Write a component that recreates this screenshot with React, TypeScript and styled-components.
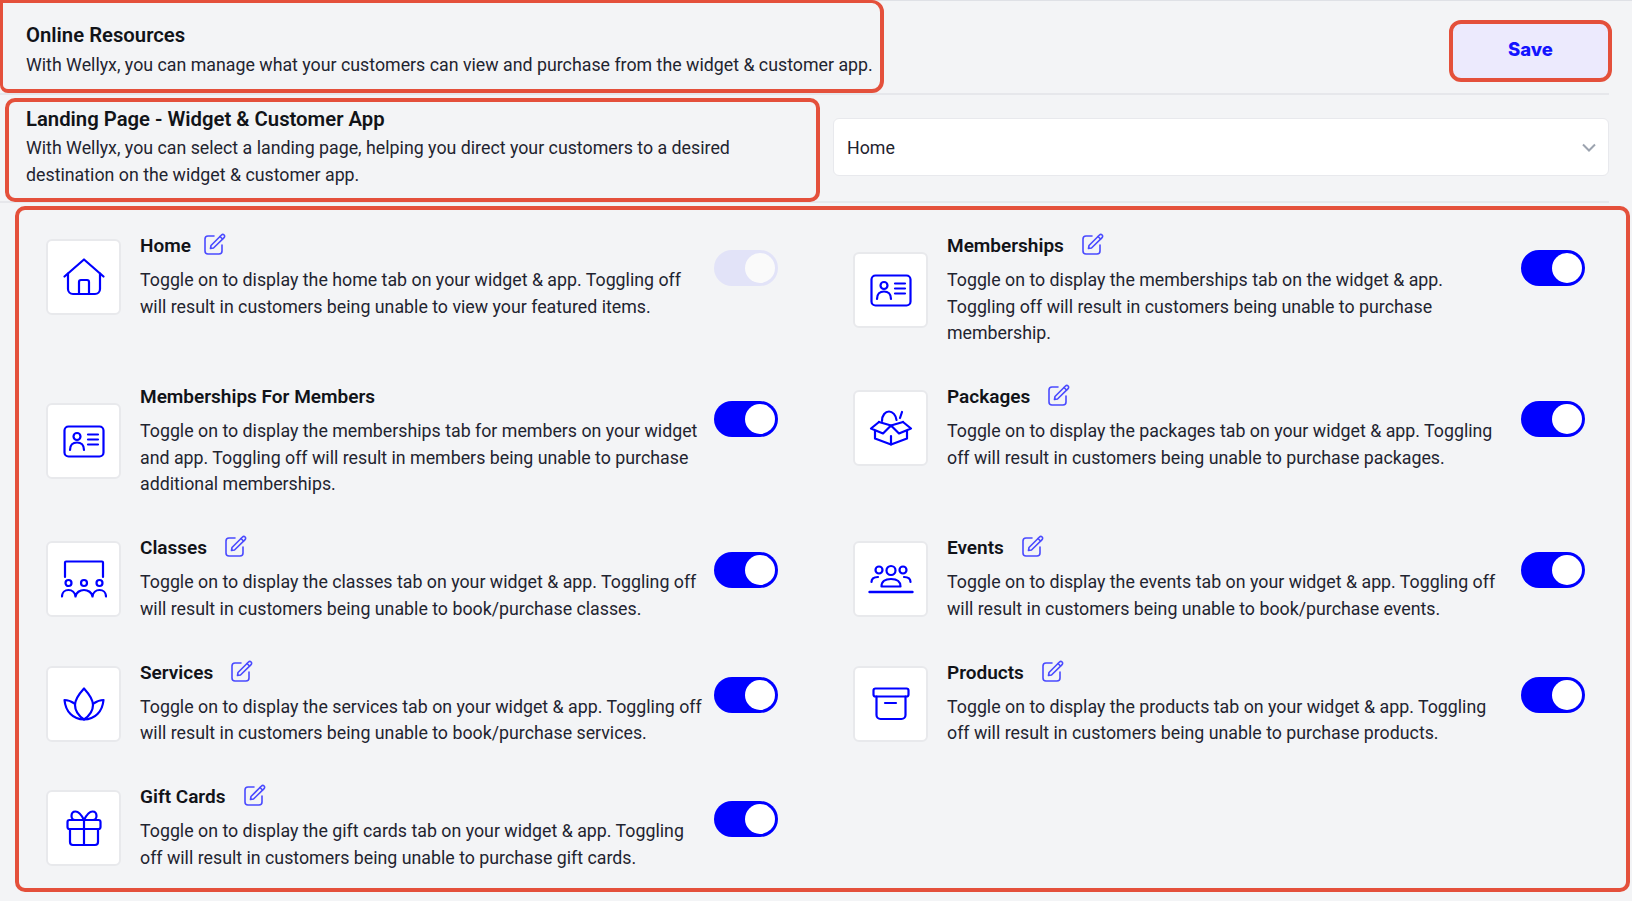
import type { ReactNode } from 'react';
import styled, { createGlobalStyle } from 'styled-components';

const GlobalStyle = createGlobalStyle`
  html, body {
    margin: 0;
    padding: 0;
    background: #f3f4f6;
  }
  * {
    box-sizing: border-box;
  }
`;

const BLUE = '#0000ff';
const RED = '#e4503b';

const Svg = ({ w, h, children }: { w: number; h: number; children: ReactNode }) => (
  <svg
    width={w}
    height={h}
    viewBox={`0 0 ${w} ${h}`}
    fill="none"
    stroke={BLUE}
    strokeWidth="2.200"
    strokeLinecap="round"
    strokeLinejoin="round"
  >
    {children}
  </svg>
);

const HomeIcon = () => (
  <Svg w={42} h={38}>
    <path d="M1.5 18.5 L21 1.5 L40.5 18.5" />
    <path d="M5 15.5 V31 a5 5 0 0 0 5 5 H32 a5 5 0 0 0 5 -5 V15.5" />
    <path d="M16 36 V24 a2 2 0 0 1 2 -2 h6 a2 2 0 0 1 2 2 V36" />
  </Svg>
);

const CardIcon = () => (
  <Svg w={42} h={33}>
    <rect x="1.5" y="1.5" width="39" height="30" rx="4" />
    <circle cx="14" cy="11.5" r="3.5" />
    <path d="M7 25 c0 -5 3 -7.5 7 -7.5 s7 2.5 7 7.5" />
    <path d="M25 9.5 H35 M25 14.5 H35 M25 19.5 H35" />
  </Svg>
);

const ClassesIcon = () => (
  <Svg w={46} h={38}>
    <path d="M4 17 V2.5 a1 1 0 0 1 1 -1 H41 a1 1 0 0 1 1 1 V17" />
    <circle cx="7.5" cy="23" r="3" />
    <circle cx="23" cy="23" r="3" />
    <circle cx="38.5" cy="23" r="3" />
    <path d="M1 36.5 c0 -4 3 -6.5 6.5 -6.5 s6.5 2.5 7 6.5 c0.5 -4 4.5 -6.5 8.5 -6.5 s8 2.500 8.500 6.500 c0.500 -4 3.500 -6.500 7 -6.500 s6.500 2.500 6.500 6.500" />
  </Svg>
);

const LotusIcon = () => (
  <Svg w={42} h={34}>
    <path d="M21 1.500 C16 7 12 12 12 18 C12 24 16 29 21 32.500 C26 29 30 24 30 18 C30 12 26 7 21 1.500 Z" />
    <path d="M11.500 16.500 C8.500 14.500 5.500 13 1.500 13 C2.500 24.500 10 32.500 21 32.500 C32 32.500 39.500 24.500 40.500 13 C36.500 13 33.500 14.500 30.500 16.500" />
  </Svg>
);

const GiftIcon = () => (
  <Svg w={36} h={37}>
    <rect x="1.500" y="10" width="33" height="9" rx="2" />
    <path d="M4 19 V32 a3 3 0 0 0 3 3 H29 a3 3 0 0 0 3 -3 V19" />
    <path d="M18 10 V35" />
    <path d="M18 10 C15 4 12 1.500 9.500 1.500 C6.500 1.500 5.500 4 5.500 6 C5.500 8 7 10 9 10" />
    <path d="M18 10 C21 4 24 1.500 26.500 1.500 C29.500 1.500 30.500 4 30.500 6 C30.500 8 29 10 27 10" />
  </Svg>
);

const PackageIcon = () => (
  <Svg w={44} h={36}>
    <path d="M13 11 C13 5 16.500 1.500 20 1.500 C23.500 1.500 27 5 27.500 10" />
    <path d="M31 8 L33 2" />
    <path d="M10 12 L22 15.500 L34 12" />
    <path d="M10 12 L2 18.500 L14 23.500 L22 15.500 L30 23.500 L42 18.500 L34 12" />
    <path d="M6 21 V28.500 L22 34.500 L38 28.500 V21" />
    <path d="M22 26 V34.500" />
  </Svg>
);

const EventsIcon = () => (
  <Svg w={46} h={30}>
    <circle cx="11" cy="6" r="3.500" />
    <circle cx="23" cy="6.500" r="4.500" />
    <circle cx="35" cy="6" r="3.500" />
    <path d="M3.500 18 C3.500 14.500 6.500 13 10 13" />
    <path d="M42.500 18 C42.500 14.500 39.500 13 36 13" />
    <path d="M13.500 22.500 C13.500 17.500 17 15 23 15 C29 15 32.500 17.500 32.500 22.500 Z" />
    <path d="M1.500 28 H44.500" strokeWidth="2.400" />
  </Svg>
);

const BoxIcon = () => (
  <Svg w={38} h={34}>
    <rect x="1.500" y="1.500" width="35" height="8" rx="2" />
    <path d="M4.500 9.500 V28 a4 4 0 0 0 4 4 H29.500 a4 4 0 0 0 4 -4 V9.500" />
    <path d="M13 16 H24" />
  </Svg>
);

const EditIcon = () => (
  <svg
    width="22"
    height="22"
    viewBox="0 0 22 22"
    fill="none"
    stroke="#4a4aff"
    strokeWidth="1.600"
    strokeLinecap="round"
    strokeLinejoin="round"
  >
    <path d="M10 3 H4 a3 3 0 0 0 -3 3 V18 a3 3 0 0 0 3 3 H15 a3 3 0 0 0 3 -3 V12" />
    <path d="M7 12.500 L17.500 2 a1.800 1.800 0 0 1 2.600 2.600 L9.500 15 L6.500 15.500 Z" />
    <path d="M16 3.500 L18.500 6" />
  </svg>
);

const ChevronIcon = () => (
  <svg width="14" height="9" viewBox="0 0 14 9" fill="none" stroke="#9ca3af" strokeWidth="2">
    <path d="M1 1.500 L7 7.500 L13 1.500" />
  </svg>
);

interface Resource {
  title: string;
  text: ReactNode;
  icon: ReactNode;
  disabled?: boolean;
  tightEdit?: boolean;
  noEdit?: boolean;
}

const resources: Resource[] = [
  {
    title: 'Home',
    text: 'Toggle on to display the home tab on your widget & app. Toggling off will result in customers being unable to view your featured items.',
    icon: <HomeIcon />,
    disabled: true,
    tightEdit: true,
  },
  {
    title: 'Memberships',
    text: 'Toggle on to display the memberships tab on the widget & app. Toggling off will result in customers being unable to purchase membership.',
    icon: <CardIcon />,
  },
  {
    title: 'Memberships For Members',
    text: 'Toggle on to display the memberships tab for members on your widget and app. Toggling off will result in members being unable to purchase additional memberships.',
    icon: <CardIcon />,
    noEdit: true,
  },
  {
    title: 'Packages',
    text: 'Toggle on to display the packages tab on your widget & app. Toggling off will result in customers being unable to purchase packages.',
    icon: <PackageIcon />,
  },
  {
    title: 'Classes',
    text: 'Toggle on to display the classes tab on your widget & app. Toggling off will result in customers being unable to book/purchase classes.',
    icon: <ClassesIcon />,
  },
  {
    title: 'Events',
    text: 'Toggle on to display the events tab on your widget & app. Toggling off will result in customers being unable to book/purchase events.',
    icon: <EventsIcon />,
  },
  {
    title: 'Services',
    text: 'Toggle on to display the services tab on your widget & app. Toggling off will result in customers being unable to book/purchase services.',
    icon: <LotusIcon />,
  },
  {
    title: 'Products',
    text: 'Toggle on to display the products tab on your widget & app. Toggling off will result in customers being unable to purchase products.',
    icon: <BoxIcon />,
  },
  {
    title: 'Gift Cards',
    text: 'Toggle on to display the gift cards tab on your widget & app. Toggling off will result in customers being unable to purchase gift cards.',
    icon: <GiftIcon />,
  },
];

const App = () => (
  <Page>
    <GlobalStyle />
    <TopRow>
      <IntroBox>
        <Heading>Online Resources</Heading>
        <Description>
          With Wellyx, you can manage what your customers can view and purchase from the widget &amp; customer app.
        </Description>
      </IntroBox>
      <SaveButton>Save</SaveButton>
    </TopRow>
    <LandingRow>
      <LandingBox>
        <Heading>Landing Page - Widget &amp; Customer App</Heading>
        <Description $tight>
          With Wellyx, you can select a landing page, helping you direct your customers to a desired destination on
          the widget &amp; customer app.
        </Description>
      </LandingBox>
      <Select>
        Home
        <ChevronIcon />
      </Select>
    </LandingRow>
    <ResourcePanel>
      {resources.map((item) => (
        <ResourceItem key={item.title}>
          <IconTile>{item.icon}</IconTile>
          <ResourceBody>
            <TitleLine $tight={item.tightEdit}>
              <ResourceTitle>{item.title}</ResourceTitle>
              {!item.noEdit && <EditIcon />}
            </TitleLine>
            <ResourceText>{item.text}</ResourceText>
          </ResourceBody>
          <Toggle $disabled={item.disabled}>
            <Knob $disabled={item.disabled} />
          </Toggle>
        </ResourceItem>
      ))}
    </ResourcePanel>
  </Page>
);

const Page = styled.div`
  height: 901px;
  overflow: hidden;
  background: #f3f4f6;
  box-shadow: inset 0 1px 0 #dfe1e6;
  font-family: Roboto, 'Liberation Sans', sans-serif;
  color: #1f2430;
`;

const TopRow = styled.div`
  display: flex;
  justify-content: space-between;
  align-items: flex-start;
  height: 95px;
  margin-right: 23px;
  border-bottom: 2px solid #e6e7eb;
`;

const IntroBox = styled.div`
  width: 884px;
  height: 93px;
  padding: 19px 0 0 23px;
  border: 4px solid ${RED};
  border-top-width: 3px;
  border-left-width: 3px;
  border-radius: 0 12px 12px 8px;
`;

const SaveButton = styled.button`
  width: 163px;
  height: 62px;
  margin: 20px -3px 0 0;
  padding: 0 0 4px;
  border: 4px solid ${RED};
  border-radius: 12px;
  background: #eceafd;
  color: #1414ff;
  font-family: Inter, sans-serif;
  font-size: 18.500px;
  font-weight: 800;
`;

const LandingRow = styled.div`
  display: flex;
  align-items: flex-start;
  height: 108px;
  margin-right: 23px;
  padding: 3px 0 0 5px;
  border-bottom: 2px solid #e6e7eb;
`;

const LandingBox = styled.div`
  width: 815px;
  height: 104px;
  flex-shrink: 0;
  padding: 4px 0 0 17px;
  border: 4px solid ${RED};
  border-radius: 10px;
`;

const Heading = styled.h2`
  margin: 0;
  font-size: 20.300px;
  line-height: 27px;
  font-weight: 600;
  color: #111318;
`;

const Description = styled.p<{ $tight?: boolean }>`
  margin: ${({ $tight }) => ($tight ? '2px' : '3px')} 0 0;
  font-size: 17.800px;
  line-height: 26.500px;
`;

const Select = styled.div`
  display: flex;
  align-items: center;
  justify-content: space-between;
  flex: 1;
  height: 58px;
  margin: 20px 0 0 13px;
  padding: 0 12px 0 13px;
  border: 1px solid #e8e9ed;
  border-radius: 6px;
  background: #fff;
  font-size: 17.800px;
`;

const ResourcePanel = styled.div`
  display: grid;
  grid-template-columns: 733px 733px;
  column-gap: 74px;
  row-gap: 36.500px;
  align-items: start;
  align-content: start;
  height: 686px;
  margin: 3px 2px 0 15px;
  padding: 22px 27px 0;
  border: 4px solid ${RED};
  border-radius: 10px;
`;

const ResourceItem = styled.div`
  display: flex;
  align-items: center;
  gap: 19px;
`;

const IconTile = styled.div`
  display: flex;
  align-items: center;
  justify-content: center;
  flex-shrink: 0;
  width: 75px;
  height: 76px;
  margin-top: 2px;
  border: 2px solid #e8e9ec;
  border-radius: 6px;
  background: #fff;
`;

const ResourceBody = styled.div`
  width: 562px;
`;

const TitleLine = styled.div<{ $tight?: boolean }>`
  display: flex;
  align-items: center;
  gap: ${({ $tight }) => ($tight ? '13px' : '18px')};
  height: 27px;
  margin-bottom: 8px;

  svg {
    margin-top: -3px;
  }
`;

const ResourceTitle = styled.h3`
  margin: 0;
  font-size: 19px;
  font-weight: 600;
  color: #111318;
`;

const ResourceText = styled.p`
  margin: 0;
  font-size: 17.800px;
  line-height: 26.500px;
`;

const Toggle = styled.div<{ $disabled?: boolean }>`
  display: flex;
  justify-content: flex-end;
  align-items: center;
  align-self: flex-start;
  flex-shrink: 0;
  width: 64px;
  height: 36px;
  margin: 18px 0 0 -7px;
  padding: 0 3px;
  border-radius: 18px;
  background: ${({ $disabled }) => ($disabled ? '#e2e3f8' : BLUE)};
`;

const Knob = styled.span<{ $disabled?: boolean }>`
  display: block;
  width: 30px;
  height: 30px;
  border-radius: 50%;
  background: ${({ $disabled }) => ($disabled ? '#fafafa' : '#fff')};
`;

export default App;
